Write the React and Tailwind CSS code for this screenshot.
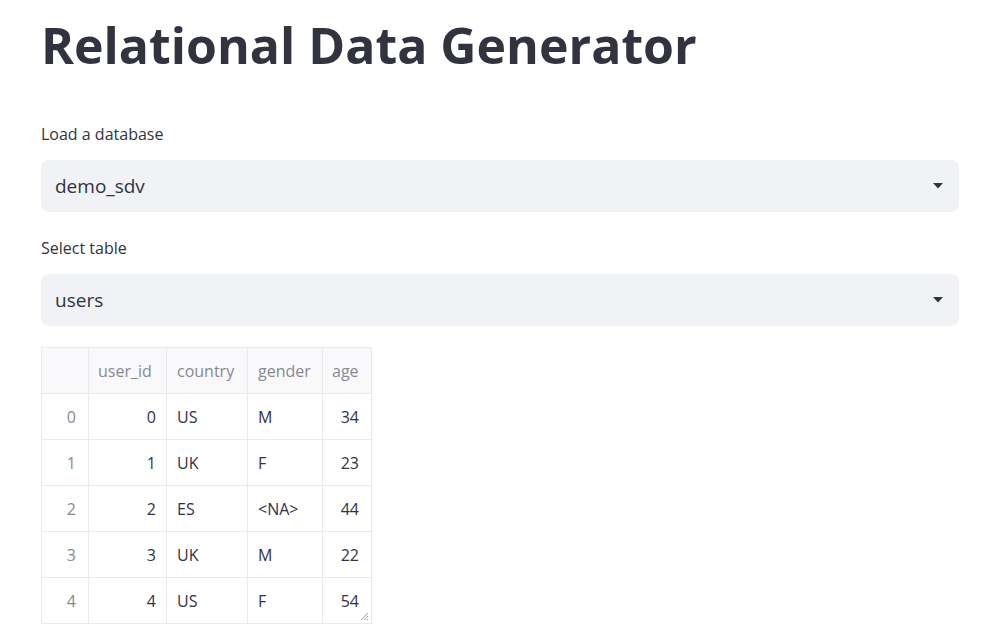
const rows = [
  { id: 0, country: 'US', gender: 'M', age: 34 },
  { id: 1, country: 'UK', gender: 'F', age: 23 },
  { id: 2, country: 'ES', gender: '<NA>', age: 44 },
  { id: 3, country: 'UK', gender: 'M', age: 22 },
  { id: 4, country: 'US', gender: 'F', age: 54 },
];

function Caret() {
  return (
    <svg width="10" height="6" viewBox="0 0 10 6" className="shrink-0">
      <path d="M0 0 L10 0 L5 5.5 Z" fill="#31333f" />
    </svg>
  );
}

function Select({ label, value }) {
  return (
    <div>
      <div className="text-[16px] leading-none text-[#31333f]">{label}</div>
      <div className="mt-[18px] flex h-[52px] items-center justify-between rounded-lg bg-[#f0f2f6] pl-[14px] pr-[16px]">
        <span className="text-[19px] text-[#31333f]">{value}</span>
        <Caret />
      </div>
    </div>
  );
}

export default function App() {
  const cell = 'flex h-[46px] items-center border-r border-b border-[#e9eaee] text-[16px]';
  return (
    <div className="min-h-[640px] bg-white px-[41px] pt-[13px] text-[#31333f]" style={{ fontFamily: '"Open Sans", Lato, sans-serif' }}>
      <h1 className="text-[50px] font-bold leading-[64px] text-[#31333f]">Relational Data Generator</h1>

      <div className="mt-[49px] w-[918px]">
        <Select label="Load a database" value="demo_sdv" />
      </div>
      <div className="mt-[28px] w-[918px]">
        <Select label="Select table" value="users" />
      </div>

      <div className="relative mt-[21px] inline-grid grid-cols-[47px_78px_81px_75px_49px] border-l border-t border-[#e9eaee]">
        <div className={`${cell} bg-[#f9f9fb]`} />
        <div className={`${cell} bg-[#f9f9fb] pl-[9px] text-[#878993]`}>user_id</div>
        <div className={`${cell} bg-[#f9f9fb] pl-[10px] text-[#878993]`}>country</div>
        <div className={`${cell} bg-[#f9f9fb] pl-[10px] text-[#878993]`}>gender</div>
        <div className={`${cell} bg-[#f9f9fb] pl-[9px] text-[#878993]`}>age</div>
        {rows.map(r => (
          <div key={r.id} className="contents">
            <div className={`${cell} justify-end pr-[12px] text-[#878993]`}>{r.id}</div>
            <div className={`${cell} justify-end pr-[10px]`}>{r.id}</div>
            <div className={`${cell} pl-[10px]`}>{r.country}</div>
            <div className={`${cell} pl-[10px]`}>{r.gender}</div>
            <div className={`${cell} justify-end pr-[12px]`}>{r.age}</div>
          </div>
        ))}
        <svg width="9" height="9" viewBox="0 0 9 9" className="absolute bottom-[3px] right-[3px]">
          <path d="M8 1 L1 8 M8 4 L4 8 M8 7 L7 8" stroke="#9a9ca3" strokeWidth="1" />
        </svg>
      </div>
    </div>
  );
}
